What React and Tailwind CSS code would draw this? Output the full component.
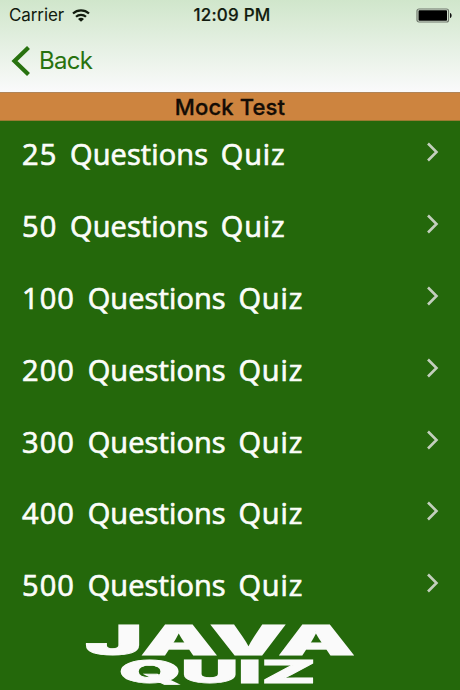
import React from 'react';

const QUIZZES = ['25', '50', '100', '200', '300', '400', '500'];

const StatusBar = () => (
  <div className="relative flex h-[30px] items-center justify-between pl-[9px] pr-[7px] text-[#111b0e]">
    <div className="flex items-center gap-[8px]">
      <span className="text-[17px] leading-[30px] tracking-[-0.1px]">Carrier</span>
      <svg width="18" height="13" viewBox="0 0 18 13" fill="none" stroke="currentColor" strokeWidth="2.2">
        <path d="M1 4.5C5.5 0.3 12.5 0.3 17 4.5" />
        <path d="M4 7.8C6.8 5.2 11.2 5.2 14 7.8" />
        <path d="M9 12.8L6 9.9C7.7 8.5 10.3 8.5 12 9.9Z" fill="currentColor" stroke="none" />
      </svg>
    </div>
    <span className="absolute inset-x-0 pl-[4px] text-center text-[17px] font-medium leading-[30px] tracking-[0.2px] [-webkit-text-stroke:0.2px]">
      12:09 PM
    </span>
    <svg width="37" height="15" viewBox="0 0 37 15">
      <rect x="1" y="1" width="31.5" height="13" rx="2" fill="#dbe9d7" stroke="#6f776c" strokeWidth="1.2" />
      <rect x="2.5" y="2.3" width="28.5" height="10.4" rx="0.8" fill="#000" />
      <path d="M34 5C36.2 5.4 36.2 9.6 34 10Z" fill="#111" />
    </svg>
  </div>
);

const NavBar = () => (
  <button className="flex h-[62px] items-center pl-[11px] text-[#28720f]">
    <svg width="20" height="30" viewBox="0 0 20 30" fill="none" stroke="currentColor" strokeWidth="4.2">
      <path d="M17.5 1.5L3.5 15L17.5 28.5" />
    </svg>
    <span className="pl-[8px] text-[24px] leading-[62px] tracking-[-0.7px]">Back</span>
  </button>
);

const QuizRow = ({ count }) => (
  <li className="flex h-[71.9px] items-start justify-between pl-[22px] pr-[21px] pt-[13px]">
    <span className="whitespace-nowrap font-['Chalkboard_SE','Open_Sans',sans-serif] text-[29px] leading-[40px] tracking-[0.1px] [word-spacing:5px] [-webkit-text-stroke:0.7px]">
      <span className="tracking-[1.1px]">{count}</span> Questions <span className="tracking-[0.9px]">Quiz</span>
    </span>
    <svg className="mt-[8px]" width="13" height="20" viewBox="0 0 13 20" fill="none" stroke="#c3cfbd" strokeWidth="2.6">
      <path d="M2 1.5L10.5 10L2 18.5" />
    </svg>
  </li>
);

const Logo = () => (
  <svg
    className="block font-['Inter',sans-serif]"
    width="460"
    height="80"
    viewBox="0 0 460 80"
    fill="#fafafa"
    stroke="#fafafa"
    strokeWidth="0.8"
    fontWeight="900"
  >
    <text x="85" y="44.7" fontSize="41.5" textLength="270" lengthAdjust="spacingAndGlyphs">
      JAVA
    </text>
    <text x="119" y="73" fontSize="31.5" textLength="197" lengthAdjust="spacingAndGlyphs">
      QUIZ
    </text>
  </svg>
);

const App = () => {
  return (
    <div className="flex h-[690px] w-[460px] flex-col overflow-hidden bg-[#24680b] font-['Inter','Liberation_Sans',sans-serif]">
      <header className="flex h-[92px] shrink-0 flex-col bg-linear-to-b from-[#d0e6cb] to-[#fafafb]">
        <StatusBar />
        <NavBar />
      </header>
      <h1 className="h-[29px] shrink-0 border-y border-t-[#b08458] border-b-[#9a7a32] bg-[#cd843f] text-center text-[22px] font-medium leading-[28px] tracking-[0.15px] text-[#140c05] [-webkit-text-stroke:0.3px]">
        Mock Test
      </h1>
      <ul className="h-[489px] shrink-0 overflow-hidden text-[#fbfdf9]">
        {QUIZZES.map((count) => (
          <QuizRow key={count} count={count} />
        ))}
      </ul>
      <Logo />
    </div>
  );
};

export default App;
